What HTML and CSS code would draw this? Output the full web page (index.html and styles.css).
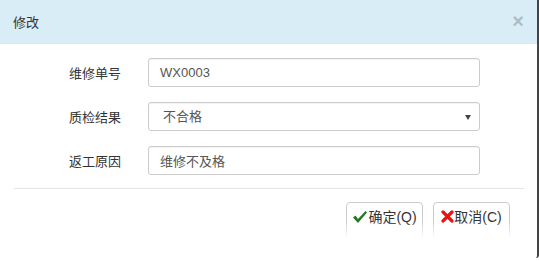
FILE: index.html
```html
<!DOCTYPE html>
<html lang="en">
<head>
    <meta charset="UTF-8">
    <meta name="viewport" content="width=device-width, initial-scale=1.0">
    <title>修改</title>
    <link rel="stylesheet" href="styles.css">
</head>
<body>

<div class="modal-dialog">
    <div class="modal-header">
        <h4 class="modal-title">修改</h4>
        <span class="close">&times;</span>
    </div>

    <form class="modal-body" id="editForm">
        <label for="repairNo">维修单号</label>
        <input type="text" id="repairNo" class="form-control" value="WX0003" />

        <label for="checkResult">质检结果</label>
        <div class="select-wrap">
            <select id="checkResult" class="form-control">
                <option value="fail">不合格</option>
                <option value="pass">合格</option>
            </select>
        </div>

        <label for="reason">返工原因</label>
        <input type="text" id="reason" class="form-control" value="维修不及格" />
    </form>

    <div class="modal-footer">
        <button type="button" class="btn">
            <svg class="icon" width="16" height="14" viewBox="0 0 16 14"><path d="M1 7.5 L3.5 5.5 L6 9 L13.5 1 L15 2.5 L6 13 Z" fill="#217a21"/></svg>确定(Q)
        </button>
        <button type="button" class="btn">
            <svg class="icon" width="13" height="13" viewBox="0 0 13 13"><path d="M2 2 L11 11 M11 2 L2 11" stroke="#ee1111" stroke-width="3.2" stroke-linecap="round"/></svg>取消(C)
        </button>
    </div>
</div>

</body>
</html>
```

FILE: styles.css
```css
body {
    font-family: "Liberation Sans", "Noto Sans CJK SC", sans-serif;
    font-size: 13px;
    color: #333;
    background-color: #fff;
    margin: 0;
    padding: 0;
}

.modal-dialog {
    width: 537px;
    height: 258px;
    background-color: #fff;
    border-right: 2px solid #444;
    border-bottom-right-radius: 3px;
}

.modal-header {
    height: 43px;
    display: flex;
    align-items: center;
    justify-content: space-between;
    padding: 0 13px;
    background-color: #d9edf7;
    border-bottom: 1px solid #e5e5e5;
}

.modal-title {
    margin: 0;
    font-size: 13px;
    font-weight: normal;
    color: #333;
}

.close {
    font-size: 20px;
    font-weight: bold;
    color: #000;
    opacity: 0.2;
    line-height: 1;
    margin-top: -1px;
}

.modal-body {
    display: grid;
    grid-template-columns: 107px 332px;
    column-gap: 27px;
    row-gap: 15px;
    align-items: center;
    padding: 14px 0 13px 0;
    margin: 0 13px 0 14px;
    border-bottom: 1px solid #e5e5e5;
}

.modal-body label {
    text-align: right;
    color: #333;
}

.form-control {
    box-sizing: border-box;
    width: 332px;
    height: 29px;
    padding: 0 11px;
    font-family: inherit;
    font-size: 13px;
    color: #555;
    background-color: #fff;
    border: 1px solid #ccc;
    border-radius: 3px;
    box-shadow: inset 0 1px 1px rgba(0, 0, 0, 0.05);
    outline: none;
}

.select-wrap {
    position: relative;
}

.select-wrap select {
    appearance: none;
    -webkit-appearance: none;
    padding-left: 14px;
}

.select-wrap::after {
    content: "";
    position: absolute;
    right: 9px;
    top: 13px;
    border-left: 3px solid transparent;
    border-right: 3px solid transparent;
    border-top: 5px solid #444;
}

.modal-footer {
    display: flex;
    justify-content: flex-end;
    gap: 10px;
    padding: 13px 27px 0 0;
}

.btn {
    position: relative;
    box-sizing: border-box;
    width: 77px;
    height: 37px;
    padding: 5px 0 0 0;
    display: flex;
    justify-content: center;
    align-items: flex-start;
    font-family: inherit;
    font-size: 14px;
    line-height: 18px;
    color: #333;
    background-color: #fff;
    border: 1px solid #ccc;
    border-radius: 4px;
    cursor: pointer;
}

/* fade the lower half of the button into the page */
.btn::after {
    content: "";
    position: absolute;
    left: -2px;
    right: -2px;
    bottom: -2px;
    height: 55%;
    background: linear-gradient(rgba(255, 255, 255, 0), #fff 90%);
}

.icon {
    margin-top: 2px;
    flex-shrink: 0;
}
```
